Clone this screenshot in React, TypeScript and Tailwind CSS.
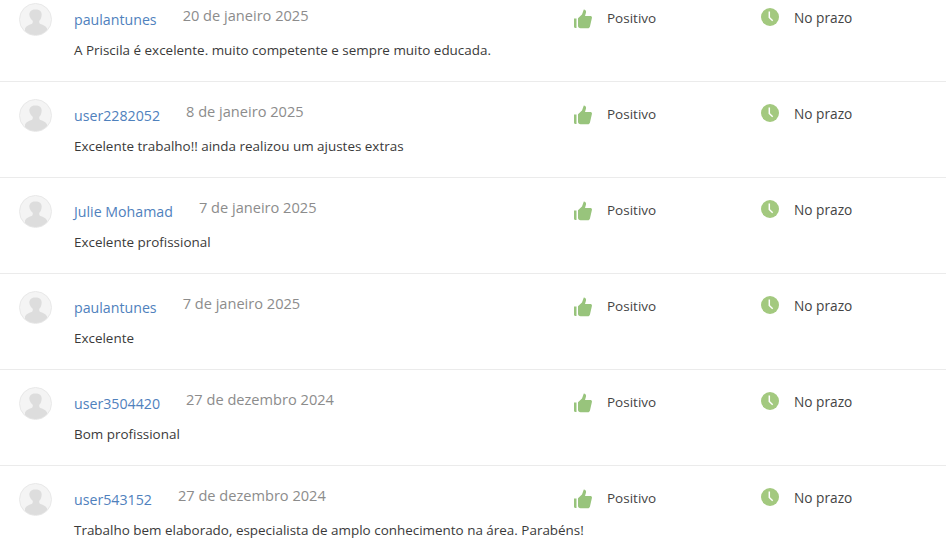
const reviews = [
  { name: 'paulantunes', date: '20 de janeiro 2025', text: 'A Priscila é excelente. muito competente e sempre muito educada.' },
  { name: 'user2282052', date: '8 de janeiro 2025', text: 'Excelente trabalho!! ainda realizou um ajustes extras' },
  { name: 'Julie Mohamad', date: '7 de janeiro 2025', text: 'Excelente profissional' },
  { name: 'paulantunes', date: '7 de janeiro 2025', text: 'Excelente' },
  { name: 'user3504420', date: '27 de dezembro 2024', text: 'Bom profissional' },
  { name: 'user543152', date: '27 de dezembro 2024', text: 'Trabalho bem elaborado, especialista de amplo conhecimento na área. Parabéns!' },
];

function Avatar() {
  return (
    <svg width="33" height="33" viewBox="0 0 33 33" className="shrink-0">
      <clipPath id="avatar-clip">
        <circle cx="16.500" cy="16.500" r="15.500" />
      </clipPath>
      <circle cx="16.500" cy="16.500" r="16" fill="#f4f4f4" stroke="#e8e8e8" />
      <path clipPath="url(#avatar-clip)" d="M16.500 6.500c4 0 6.300 1.800 6.200 5.300-.1 2.600-1 4.700-2.400 6-.3 1.500 0 2.700 1.200 3.300 2.800 1.100 5.300 1.900 6.500 4.400V33H6v-7.500c1.200-2.500 3.700-3.300 6.500-4.400 1.200-.6 1.500-1.800 1.200-3.300-1.400-1.300-3.300-3.400-3.400-6-.1-3.500 2.700-5.300 5.700-5.300z" fill="#dddddd" />
    </svg>
  );
}

function ThumbIcon() {
  return (
    <svg width="18" height="20" viewBox="0 0 18 20" className="shrink-0">
      <path d="M0 9.500h2.500V19H1.200C.5 19 0 18.500 0 17.800z" fill="#98c47c" />
      <path d="M4 9.200 8 5.500 9.800.5c1.700 0 2.500 1.300 2.200 3L11 7h5.300c1.200 0 1.900 1 1.600 2.100l-2 8.600c-.3.900-1 1.500-1.900 1.500H6.500C5 19.200 4 18.200 4 17z" fill="#98c47c" />
    </svg>
  );
}

function ClockIcon() {
  return (
    <svg width="18" height="18" viewBox="0 0 18 18" className="shrink-0">
      <circle cx="9" cy="9" r="9" fill="#a3c97f" />
      <path d="M8.300 3.500v6l3.400 3.200" fill="none" stroke="#fff" strokeWidth="1.500" />
    </svg>
  );
}

function ReviewRow({ name, date, text }: { name: string; date: string; text: string }) {
  return (
    <div className="flex h-[96px] border-b border-[#ebebeb] pl-[19px] pt-[17px]">
      <Avatar />
      <div className="ml-[22px] w-[500px] shrink-0">
        <div className="flex items-start">
          <a className="mt-[7px] text-[14.200px] leading-[20px] text-[#4f81bd]">{name}</a>
          <span className="ml-[26px] mt-[2px] text-[14.600px] leading-[20px] text-[#8c8c8c]">{date}</span>
        </div>
        <p className="mt-[10px] whitespace-nowrap text-[13.450px] leading-[20px] text-[#3a3a3a]">{text}</p>
      </div>
      <div className="flex w-[187px] shrink-0 items-start">
        <span className="mt-[6px]"><ThumbIcon /></span>
        <span className="ml-[15px] mt-[5px] text-[13.500px] leading-[20px] text-[#444444]">Positivo</span>
      </div>
      <div className="flex items-start">
        <span className="mt-[5px]"><ClockIcon /></span>
        <span className="ml-[15px] mt-[5px] text-[13.700px] leading-[20px] text-[#444444]">No prazo</span>
      </div>
    </div>
  );
}

export default function App() {
  return (
    <div className="h-[560px] w-[946px] overflow-hidden bg-white font-['Open_Sans',sans-serif]">
      <div className="-mt-[14px]">
        {reviews.map((r, i) => (
          <ReviewRow key={i} {...r} />
        ))}
      </div>
    </div>
  );
}
